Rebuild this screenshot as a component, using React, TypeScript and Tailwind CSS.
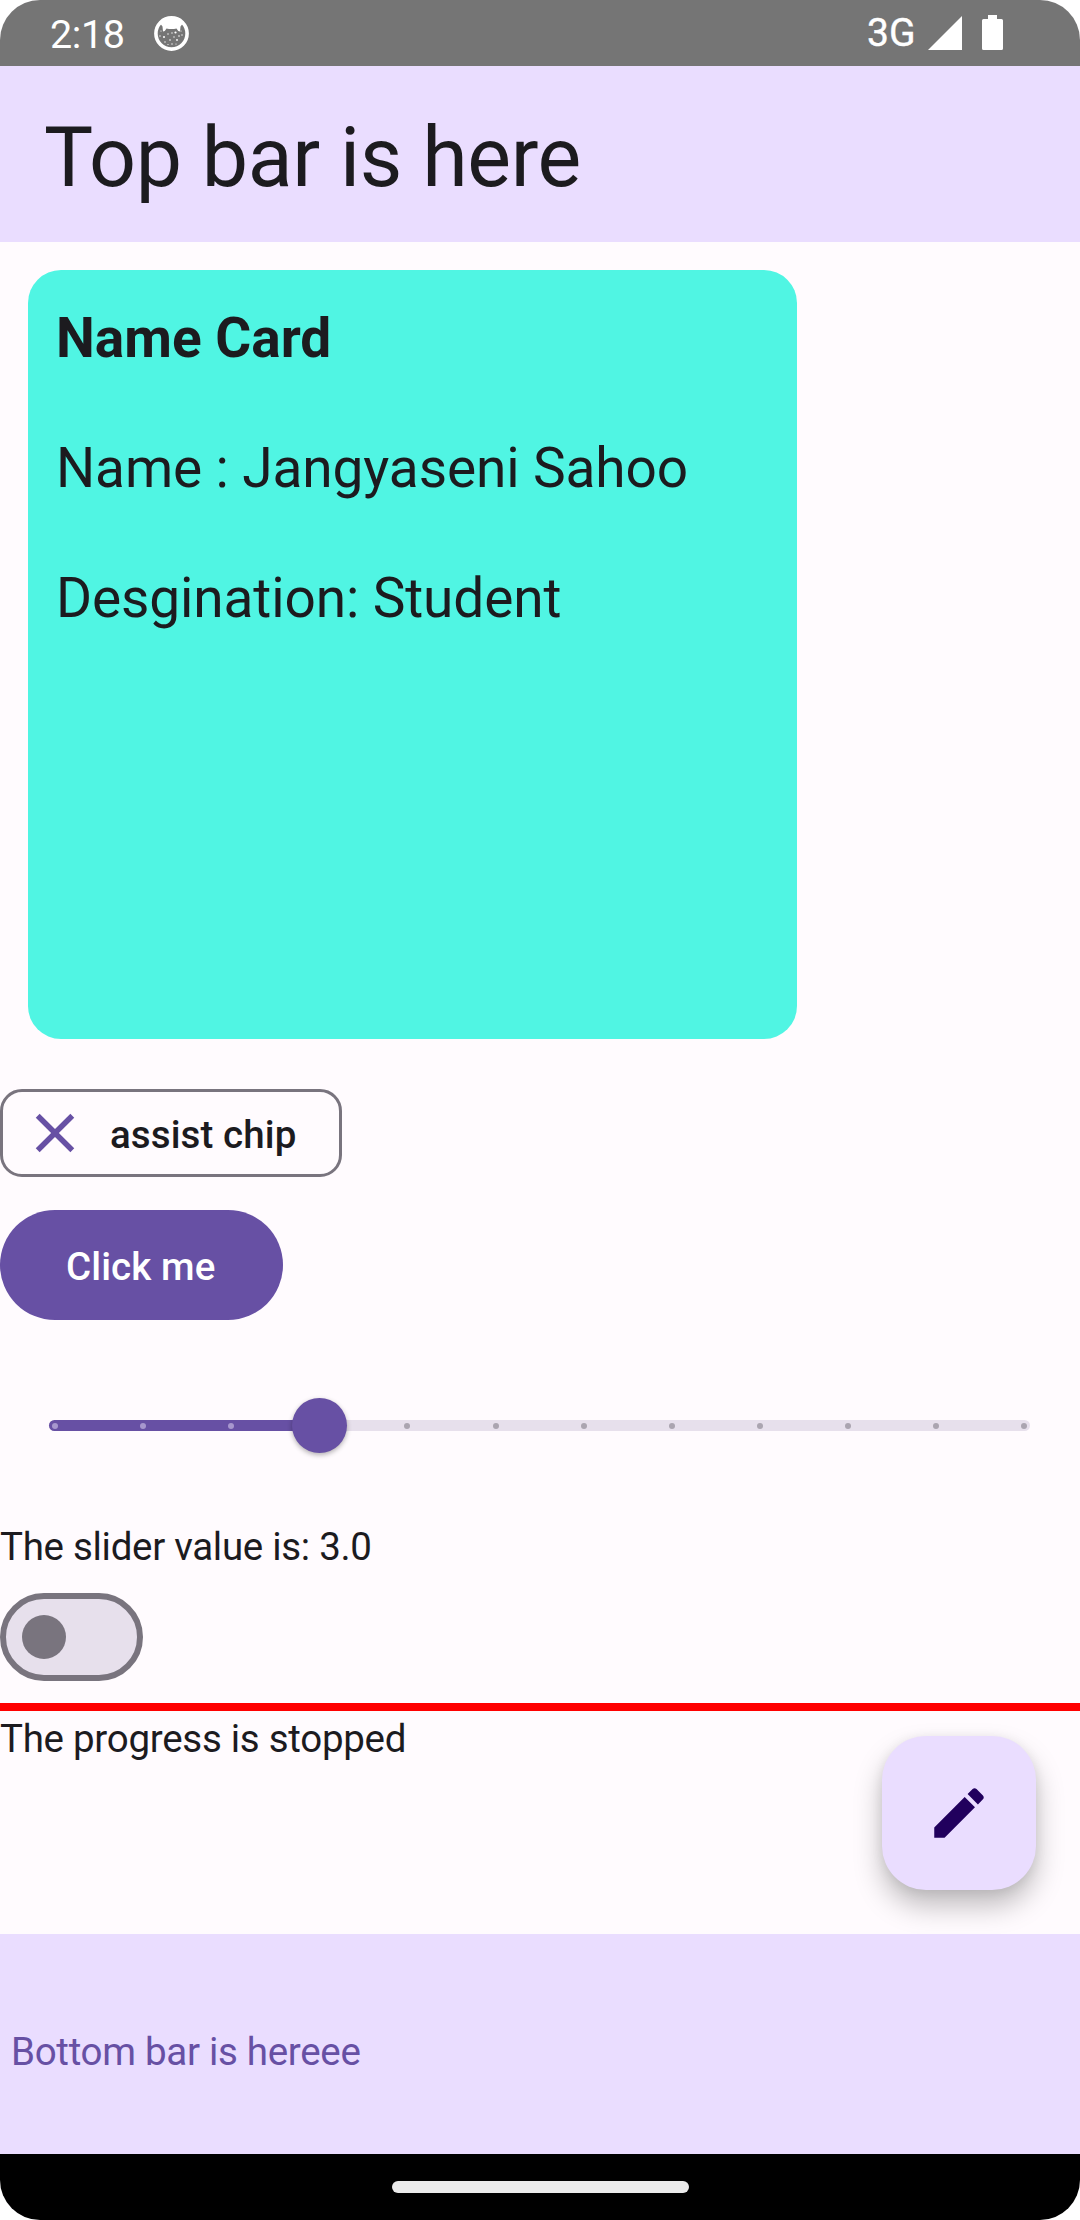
import React from "react";

const ticks = Array.from({ length: 12 }, (_, i) => i);

const dots = [
  [7, 15, 0.6], [6, 20, 0.7], [10, 21, 1], [11, 26, 0.7], [14, 18, 0.7], [16, 24, 0.8],
  [18, 17, 0.7], [21.5, 16.5, 1.1], [20, 21, 0.7], [23, 24, 0.9], [25, 20, 0.8], [18, 28, 0.7],
  [27, 15, 0.6], [28, 19, 0.7], [22, 28, 0.6], [14, 28.5, 0.6],
];

function StatusBar() {
  return (
    <div className="flex h-[66px] shrink-0 bg-[#757575] text-white">
      <div className="ml-[50px] w-[104px] pt-[11px] text-[39.5px] leading-[48px] tracking-[-0.4px]">2:18</div>
      <svg className="mt-[16px] h-[35px] w-[35px]" viewBox="0 0 35 35">
        <circle cx="17.5" cy="17.5" r="15.6" fill="none" stroke="white" strokeWidth="3.6" />
        <path d="M5 6Q17.500 -3 30 6L26.500 10.500L26 15.500Q23.500 15 22.500 12.500Q17.500 13.500 12.500 12.500Q11.500 15 9 15.500L8.500 10.500Z" fill="white" />
        {dots.map(([x, y, r]) => (
          <circle key={`${x}-${y}`} cx={x} cy={y} r={r} fill="white" />
        ))}
      </svg>
      <div className="ml-auto w-[60px] pt-[10px] text-[39px] leading-[46px] [-webkit-text-stroke:0.4px_white]">3G</div>
      <svg className="mt-[15px] h-[35px] w-[36px]" viewBox="0 0 36 35">
        <path d="M1 35L35 1V35Z" fill="white" />
      </svg>
      <svg className="ml-[19px] mr-[77px] mt-[15px] h-[35px] w-[21px]" viewBox="0 0 21 35">
        <path d="M6 0h9v4h4.500q1.500 0 1.500 1.500v28q0 1.500-1.500 1.500h-18q-1.500 0-1.500-1.500v-28q0-1.500 1.500-1.500h4.500z" fill="white" />
      </svg>
    </div>
  );
}

function Slider() {
  return (
    <div className="relative mt-[100px] ml-[49px] h-[11px] w-[981px] rounded-full bg-[#e7e0ec]">
      <div className="h-[11px] w-[270px] rounded-l-full bg-[#6750a4]" />
      {ticks.map((i) => (
        <div
          key={i}
          className={`absolute top-[3px] h-[6px] w-[6px] rounded-full ${i <= 3 ? "bg-[#e8def8]/50" : "bg-[#49454f]/38"}`}
          style={{ left: 3 + i * 88.1 }}
        />
      ))}
      <div className="absolute -top-[22px] left-[243px] h-[55px] w-[55px] rounded-full bg-[#6750a4] shadow-[0_2px_5px_rgba(0,0,0,0.3)]" />
    </div>
  );
}

export default function App() {
  return (
    <div className="h-[2220px] w-[1080px] bg-white">
      <div className="flex h-full flex-col overflow-hidden rounded-[40px] bg-[#fffbfe] font-['Roboto',sans-serif] text-[#1c1b1f]">
        <StatusBar />
        <header className="h-[176px] shrink-0 bg-[#eaddff] pl-[44px] pt-[42px] text-[82.5px] leading-[100px] tracking-[-0.33px] whitespace-nowrap">
          Top bar is here
        </header>
        <main className="relative flex h-[1692px] shrink-0 flex-col">
          <section className="mt-[28px] ml-[28px] flex h-[769px] w-[769px] shrink-0 flex-col gap-[66px] rounded-[33px] bg-[#50f5e3] pl-[28px] pt-[36px] text-[55px] leading-[64px] tracking-[-0.12px] whitespace-nowrap">
            <h2 className="font-bold tracking-normal">Name Card</h2>
            <p>Name : Jangyaseni Sahoo</p>
            <p>Desgination: Student</p>
          </section>
          <div className="mt-[50px] flex h-[88px] w-[342px] shrink-0 items-center rounded-[22px] border-[3px] border-[#79747e] pl-[19px]">
            <svg className="h-[66px] w-[66px]" viewBox="0 0 24 24" fill="#6750a4">
              <path d="M19 6.410L17.590 5L12 10.590L6.410 5L5 6.410L10.590 12L5 17.590L6.410 19L12 13.410L17.590 19L19 17.590L13.410 12z" />
            </svg>
            <span className="ml-[22px] pt-[2px] text-[38.5px] font-medium leading-[55px] tracking-[0.1px] whitespace-nowrap">assist chip</span>
          </div>
          <button className="mt-[33px] h-[110px] w-[283px] shrink-0 rounded-full bg-[#6750a4] pt-[2px] pl-[66px] text-left text-[38.5px] font-medium leading-[55px] tracking-[0.1px] whitespace-nowrap text-white">
            Click me
          </button>
          <Slider />
          <p className="mt-[88px] h-[55px] text-[38.5px] leading-[55px] tracking-[-0.3px] whitespace-nowrap">The slider value is: 3.0</p>
          <div className="mt-[19px] flex h-[88px] w-[143px] shrink-0 items-center rounded-full border-[6px] border-[#79747e] bg-[#e7e0ec] pl-[16px]">
            <div className="h-[44px] w-[44px] rounded-full bg-[#79747e]" />
          </div>
          <div className="mt-[22px] h-[8px] shrink-0 bg-[#ff0000]" />
          <p className="h-[55px] text-[38.5px] leading-[55px] tracking-[-0.28px] whitespace-nowrap">The progress is stopped</p>
          <button className="absolute right-[44px] bottom-[44px] flex h-[154px] w-[154px] items-center justify-center rounded-[44px] bg-[#eaddff] shadow-[0_16px_28px_rgba(0,0,0,0.25),0_2px_12px_rgba(0,0,0,0.08)]">
            <svg className="h-[66px] w-[66px]" viewBox="0 0 24 24" fill="#21005d">
              <path d="M3 17.250V21h3.750L17.810 9.940l-3.750-3.750L3 17.250zM20.710 7.040c.390-.390.390-1.020 0-1.410l-2.340-2.340c-.390-.390-1.020-.390-1.410 0l-1.830 1.830 3.750 3.750 1.830-1.830z" />
            </svg>
          </button>
        </main>
        <footer className="relative h-[220px] shrink-0 bg-[#eaddff] pl-[11px] pt-[90px] text-[38.5px] leading-[55px] tracking-[-0.3px] whitespace-nowrap text-[#6750a4]">
          Bottom bar is hereee
        </footer>
        <div className="flex h-[66px] shrink-0 justify-center bg-black pt-[27px]">
          <div className="h-[12px] w-[297px] rounded-full bg-[#ebebeb]" />
        </div>
      </div>
    </div>
  );
}
